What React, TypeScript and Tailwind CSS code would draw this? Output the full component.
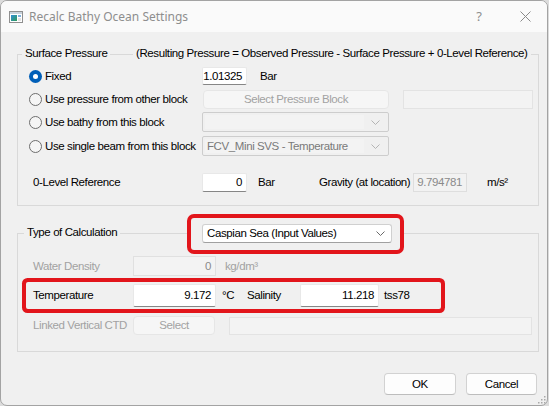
import React from "react";

const txt = "font-['Liberation_Sans',Arial,sans-serif] text-[11.5px] tracking-[-0.4px] leading-[13px]";

function Radio({ checked }: { checked?: boolean }) {
  return checked ? (
    <span className="w-[13px] h-[13px] rounded-full bg-[#005fb8] flex items-center justify-center shrink-0">
      <span className="w-[5px] h-[5px] rounded-full bg-white" />
    </span>
  ) : (
    <span className="w-[13px] h-[13px] rounded-full border border-[#6e6e6e] bg-[#f5f5f5] shrink-0" />
  );
}

function Chevron({ color }: { color: string }) {
  return (
    <svg width="9" height="5" viewBox="0 0 9 5" className="shrink-0">
      <polyline points="0.5,0.5 4.5,4.5 8.5,0.5" fill="none" stroke={color} strokeWidth="1" />
    </svg>
  );
}

function Input({ value, w, h }: { value: string; w: string; h: string }) {
  return (
    <div
      className={`${w} ${h} bg-white border border-[#e8e8e8] border-b-[#868686] rounded-[2px] flex items-center justify-end pr-[4px] text-black shrink-0`}
    >
      {value}
    </div>
  );
}

export default function App() {
  return (
    <div className={`w-[549px] h-[406px] bg-[#dcdcdc] relative overflow-hidden ${txt}`}>
      <div className="w-[548px] h-[406px] border border-[#a3a3a3] rounded-[7px] bg-[#f0f0f0] flex flex-col overflow-hidden relative">
        {/* Title bar */}
        <div className="h-[31px] bg-[#fafafa] flex items-center shrink-0">
          <svg width="14" height="12" viewBox="0 0 14 12" className="ml-[8px] shrink-0">
            <defs>
              <linearGradient id="ig" x1="0" y1="0" x2="1" y2="1">
                <stop offset="0" stopColor="#2f8fd6" />
                <stop offset="1" stopColor="#2f9a5a" />
              </linearGradient>
            </defs>
            <rect x="0.5" y="0.5" width="13" height="11" fill="#ffffff" stroke="#8f8f8f" />
            <rect x="1" y="1" width="12" height="2" fill="#c9d3dc" />
            <rect x="2" y="4" width="6" height="6" fill="url(#ig)" />
            <rect x="9" y="4" width="3" height="2" fill="#7fb1dd" />
            <rect x="9" y="7" width="3" height="3" fill="#e3e3e3" />
          </svg>
          <span className="ml-[6px] font-['Noto_Sans',sans-serif] text-[12px] tracking-normal text-[#8e8e8e]">
            Recalc Bathy Ocean Settings
          </span>
          <span className="ml-auto mr-[38px] font-['Noto_Sans',sans-serif] text-[13px] tracking-normal text-[#8e8e8e]">?</span>
          <svg width="11" height="11" viewBox="0 0 11 11" className="mr-[16px] shrink-0">
            <path d="M0.5 0.5 L10.5 10.5 M10.5 0.5 L0.5 10.5" stroke="#8a8a8a" strokeWidth="1" />
          </svg>
        </div>

        {/* Body */}
        <div className="flex flex-col pl-[16px]">
          {/* Group 1 */}
          <div className="mt-[22px] w-[522px] border border-[#d9d9d9] relative flex flex-col pl-[11px] pt-[12px] pb-[13px]">
            <span className="absolute -top-[8px] left-[4px] px-[3px] bg-[#f0f0f0] text-black">Surface Pressure</span>
            <span className="absolute -top-[8px] left-[115px] px-[3px] bg-[#f0f0f0] text-black">
              (Resulting Pressure = Observed Pressure - Surface Pressure + 0-Level Reference)
            </span>

            <div className="h-[18px] flex items-center">
              <div className="w-[173px] flex items-center gap-[3px]">
                <Radio checked />
                <span>Fixed</span>
              </div>
              <Input value="1.01325" w="w-[45px]" h="h-[18px]" />
              <span className="ml-[13px]">Bar</span>
            </div>

            <div className="mt-[5px] h-[19px] flex items-center">
              <div className="w-[174px] flex items-center gap-[3px]">
                <Radio />
                <span>Use pressure from other block</span>
              </div>
              <div className="w-[186px] h-[19px] bg-[#f6f6f6] border border-[#e6e6e6] rounded-[4px] flex items-center justify-center text-[#a2a2a2]">
                Select Pressure Block
              </div>
              <div className="ml-[14px] w-[130px] h-[19px] border border-[#e3e3e3] bg-[#f3f3f3]" />
            </div>

            <div className="mt-[3px] h-[20px] flex items-center">
              <div className="w-[173px] flex items-center gap-[3px]">
                <Radio />
                <span>Use bathy from this block</span>
              </div>
              <div className="w-[187px] h-[20px] border border-[#cdcdcd] rounded-[2px] bg-[#f0f0f0] flex items-center p-[2px]">
                <div className="flex-1 h-full bg-[#f3f3f3]" />
                <div className="w-[22px] flex justify-center">
                  <Chevron color="#b4b4b4" />
                </div>
              </div>
            </div>

            <div className="mt-[4px] h-[20px] flex items-center">
              <div className="w-[173px] flex items-center gap-[3px]">
                <Radio />
                <span>Use single beam from this block</span>
              </div>
              <div className="w-[187px] h-[20px] border border-[#cdcdcd] rounded-[2px] bg-[#f0f0f0] flex items-center p-[2px]">
                <div className="flex-1 h-full bg-[#f3f3f3] flex items-center pl-[2px] text-[#7a7a7a]">
                  FCV_Mini SVS - Temperature
                </div>
                <div className="w-[22px] flex justify-center">
                  <Chevron color="#b4b4b4" />
                </div>
              </div>
            </div>

            <div className="mt-[17px] h-[19px] flex items-center">
              <div className="w-[173px] pl-[4px]">0-Level Reference</div>
              <Input value="0" w="w-[45px]" h="h-[19px]" />
              <span className="w-[72px] pl-[11px]">Bar</span>
              <span className="w-[94px]">Gravity (at location)</span>
              <div className="w-[54px] h-[19px] border border-[#dedede] bg-[#f2f2f2] flex items-center justify-end pr-[4px] text-[#8a8a8a]">
                9.794781
              </div>
              <span className="ml-[20px]">m/s²</span>
            </div>
          </div>

          {/* Group 2 */}
          <div className="mt-[27px] w-[522px] border border-[#d9d9d9] relative flex flex-col pl-[15px] pt-[22px] pb-[16px]">
            <span className="absolute -top-[8px] left-[6px] px-[3px] bg-[#f0f0f0] text-black">Type of Calculation</span>
            <div className="absolute -top-[16px] left-[173px] w-[209px] h-[32px] rounded-[3px] ring-4 ring-[#e2151b] bg-[#f0f0f0] pl-[11px] pt-[6px]">
              <div className="w-[190px] h-[19px] bg-white border border-[#d0d0d0] border-b-[#a0a0a0] rounded-[3px] flex items-center pl-[4px] pr-[6px] text-black">
                <span className="flex-1">Caspian Sea (Input Values)</span>
                <Chevron color="#6a6a6a" />
              </div>
            </div>

            <div className="h-[20px] flex items-center text-[#a2a2a2]">
              <span className="w-[100px]">Water Density</span>
              <div className="w-[83px] h-[20px] border border-[#e0e0e0] bg-[#f3f3f3] flex items-center justify-end pr-[4px] text-[#8a8a8a]">
                0
              </div>
              <span className="ml-[9px]">kg/dm³</span>
            </div>

            <div className="mt-[6px] -ml-[7px] w-[415px] h-[27px] rounded-[2px] ring-4 ring-[#e2151b] flex items-center pl-[7px]">
              <span className="w-[100px]">Temperature</span>
              <Input value="9.172" w="w-[83px]" h="h-[23px]" />
              <span className="w-[31px] pl-[6px]">°C</span>
              <span className="w-[53px]">Salinity</span>
              <Input value="11.218" w="w-[79px]" h="h-[23px]" />
              <span className="ml-[5px]">tss78</span>
            </div>

            <div className="mt-[7px] h-[19px] flex items-center text-[#a2a2a2]">
              <span className="w-[100px]">Linked Vertical CTD</span>
              <div className="w-[82px] h-[19px] bg-[#f6f6f6] border border-[#e6e6e6] rounded-[4px] flex items-center justify-center">
                Select
              </div>
              <div className="ml-[14px] w-[303px] h-[18px] border border-[#e3e3e3] bg-[#f3f3f3]" />
            </div>
          </div>

          {/* Buttons */}
          <div className="mt-[21px] w-[522px] pr-[2px] flex justify-end gap-[10px]">
            <div className="w-[72px] h-[22px] bg-[#fdfdfd] border border-[#d2d2d2] border-b-[#bdbdbd] rounded-[4px] flex items-center justify-center text-black">
              OK
            </div>
            <div className="w-[71px] h-[22px] bg-[#fdfdfd] border border-[#d2d2d2] border-b-[#bdbdbd] rounded-[4px] flex items-center justify-center text-black">
              Cancel
            </div>
          </div>
        </div>

        {/* Resize grip */}
        <svg width="9" height="9" viewBox="0 0 9 9" className="absolute right-[1px] bottom-[1px]">
          {[
            [7, 1],
            [4, 4],
            [7, 4],
            [1, 7],
            [4, 7],
            [7, 7],
          ].map(([x, y], i) => (
            <rect key={i} x={x} y={y} width="1.5" height="1.5" fill="#a8a8a8" />
          ))}
        </svg>
      </div>
    </div>
  );
}
